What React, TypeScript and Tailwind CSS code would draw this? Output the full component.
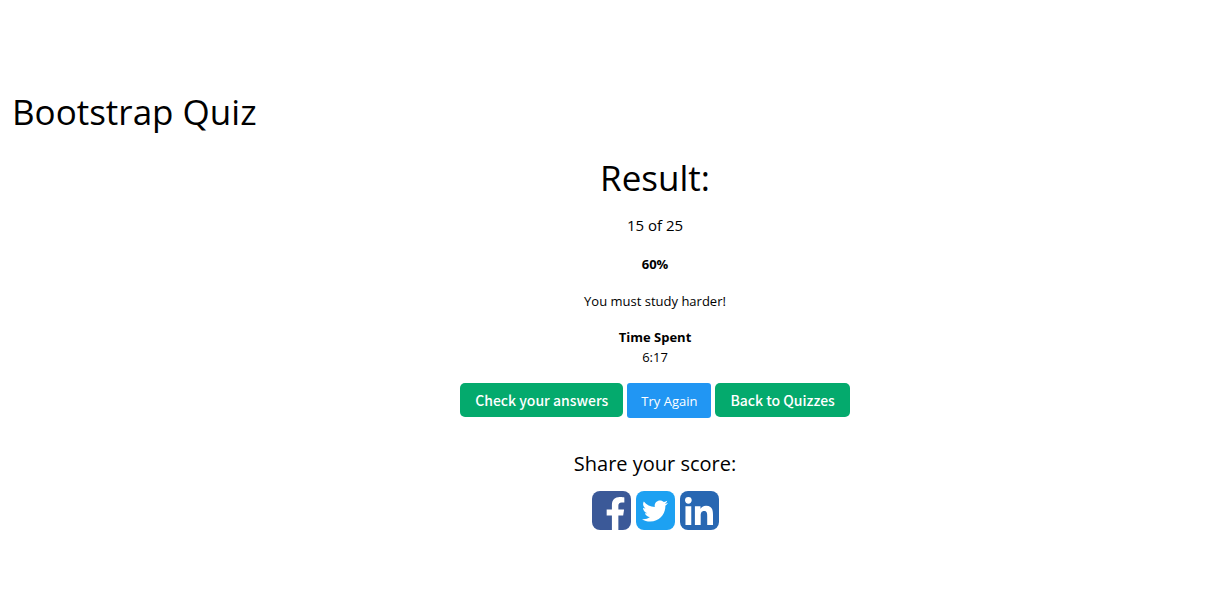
import React from "react";
import { FaFacebookF, FaLinkedinIn, FaTwitter } from "react-icons/fa";

const greenButton =
  "h-[34px] rounded-[5px] bg-[#04aa6d] px-[15px] pb-px font-['Noto_Sans_CJK_SC',sans-serif] text-[14px] leading-8 font-medium text-white";

const shareTile = "flex size-[39px] justify-center overflow-hidden rounded-lg text-white";

export default function App() {
  return (
    <main className="bg-white px-3 pt-[84px] font-['Open_Sans',sans-serif] text-black">
      <h1 className="text-[35px] leading-[56px] font-normal">Bootstrap Quiz</h1>

      <section className="flex flex-col items-center pt-2.5 pl-[101px] text-center text-[13px] leading-5">
        <h2 className="text-[35px] leading-[56px] font-normal">Result:</h2>
        <p className="mt-[7px] text-[15px] leading-6">15 of 25</p>
        <p className="mt-[17px] font-bold">60%</p>
        <p className="mt-[17px]">You must study harder!</p>
        <p className="mt-4 font-bold">Time Spent</p>
        <p>6:17</p>

        <div className="mt-4 flex items-start gap-1">
          <button type="button" className={greenButton}>
            Check your answers
          </button>
          <button
            type="button"
            className="h-[35px] rounded-[3px] bg-[#2196f3] px-3.5 text-[13px] text-white"
          >
            Try Again
          </button>
          <button type="button" className={greenButton}>
            Back to Quizzes
          </button>
        </div>

        <h3 className="mt-8 text-[20px] leading-7 font-normal">Share your score:</h3>
        <div className="mt-[13px] flex gap-[5px]">
          <a href="#facebook" aria-label="Share on Facebook" className={`${shareTile} items-end bg-[#3b5998] pl-2`}>
            <FaFacebookF className="h-[33px] w-[21px]" />
          </a>
          <a href="#twitter" aria-label="Share on Twitter" className={`${shareTile} items-center bg-[#1da1f2]`}>
            <FaTwitter className="size-[26px]" />
          </a>
          <a href="#linkedin" aria-label="Share on LinkedIn" className={`${shareTile} items-center bg-[#2867b2] pt-1`}>
            <FaLinkedinIn className="h-[32px] w-[28px]" />
          </a>
        </div>
      </section>
    </main>
  );
}
